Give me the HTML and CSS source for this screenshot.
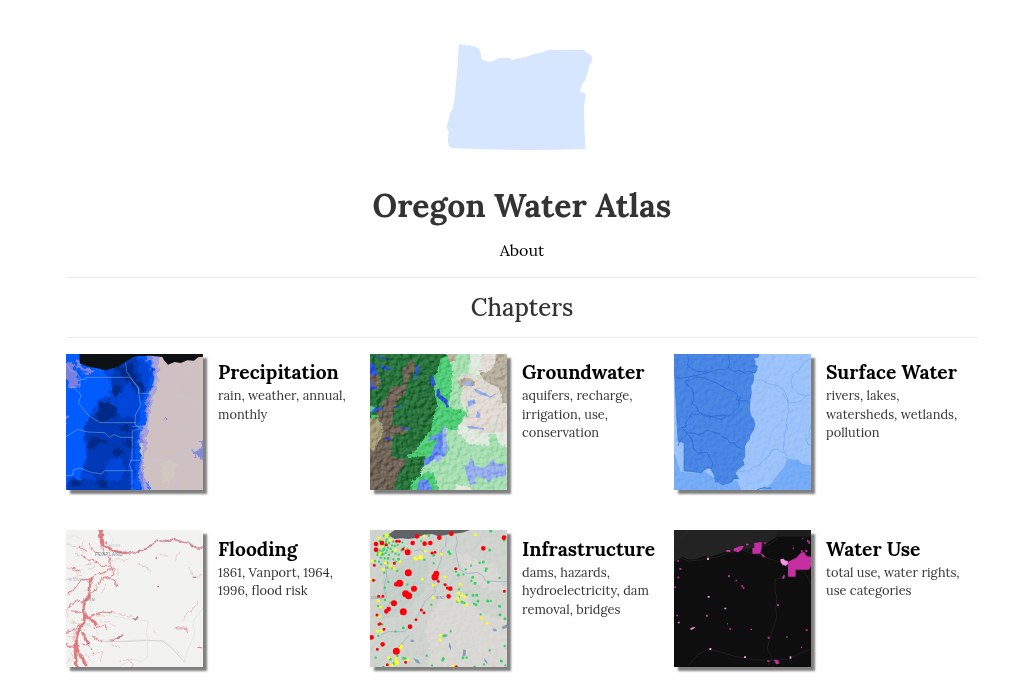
FILE: index.html
```html
<!DOCTYPE html>
<html lang="en">
<head>
<meta charset="utf-8">
<title>Oregon Water Atlas</title>
<link rel="stylesheet" href="styles.css">
</head>
<body>
<svg class="defs" width="0" height="0" aria-hidden="true">
  <defs>
    <filter id="rough" x="-5%" y="-5%" width="110%" height="110%" color-interpolation-filters="sRGB">
      <feTurbulence type="fractalNoise" baseFrequency="0.06" numOctaves="3" seed="4" result="n"/>
      <feDisplacementMap in="SourceGraphic" in2="n" scale="24" xChannelSelector="R" yChannelSelector="G"/>
      <feGaussianBlur stdDeviation="1"/>
    </filter>
    <filter id="ragged" x="-5%" y="-5%" width="110%" height="110%" color-interpolation-filters="sRGB">
      <feTurbulence type="fractalNoise" baseFrequency="0.09" numOctaves="2" seed="9" result="n"/>
      <feDisplacementMap in="SourceGraphic" in2="n" scale="12" xChannelSelector="R" yChannelSelector="G"/>
      <feGaussianBlur stdDeviation="0.8"/>
    </filter>
    <filter id="relief" x="0" y="0" width="100%" height="100%" color-interpolation-filters="sRGB">
      <feTurbulence type="fractalNoise" baseFrequency="0.07" numOctaves="3" seed="12"/>
      <feColorMatrix values="0 0 0 0 0  0 0 0 0 0  0 0 0 0 0  1 0 0 0 0"/>
      <feDiffuseLighting surfaceScale="8" diffuseConstant="0.66" lighting-color="#fff"><feDistantLight azimuth="225" elevation="52"/></feDiffuseLighting>
    </filter>
  </defs>
</svg>
<main class="page">
  <header class="masthead">
    <svg class="logo" viewBox="6 0 540 405" role="img" aria-label="Oregon">
      <path fill="#d6e6fe" d="M92 42l7 4 8-2 5 3 8-2 6 4 9 0 9 6 6 8 3 13 1 12 12 5 14 2 12-2 8-6 12-4 16 0 12 1 5 6 10-2 14-4 16-2 14-5 14-5 16-4 15-3 11-5 107-1 9 9 14 9 2 10-3 9-7 12-4 18-4 13-3 11-7 9-5 12-4 12 2 4 11 0 4 7-1 10-2 12-2 6 1 70 4 65-90 2-100 1-100-2-109-3-9-4-5-13 0-16 2-14-2-9-5-9 3-8 5-17 4-15 8-16 4-20 3-32 4-44 4-42 1-33 3-22z"/>
    </svg>
    <h1 class="title">Oregon Water Atlas</h1>
    <a class="about">About</a>
  </header>
  <h2 class="section-title"><span>Chapters</span></h2>
  <section class="chapters">
    <article class="chapter">
      <svg class="thumb" viewBox="18 27 411 408" preserveAspectRatio="none">
        <path fill="#005cff" d="M18 27h411v408H18z"/>
        <g filter="url(#rough)">
          <path fill="#0047d9" d="M125 70l65-30 60 0 28 35-25 90-5 60-15 70-15 145H70l-10-55 20-50-10-40 5-60 30-45 10-30 35-5 5-45z"/>
          <path fill="#0039b5" d="M75 230l40-30 10-25 35 0 15 35 50 10-5 80-15 50 10 95H120l-20-55-30-12 14-52zM25 400l40 5 40-4 25 44H20zM160 60l70-20 20 80 20 10-35 25-30-40-40 50-15-50z"/>
          <path fill="#0047d9" d="M140 350l40-10 20 30-20 40-40-10zM165 190l40-20 10 30-30 15z"/>
          <path fill="#002a88" d="M170 72l45-20 12 50 30 20-8 22-30-30-25-8-10-20zM120 170l25-5 25 25-5 30-45 10-12-20zM160 125l22 0-5 30-15-6zM80 290l30-18 30 20-30 5-10 18-18-10zM155 315l25-10 10 20-25 8zM110 405l30 3 8 20-30 3zM200 280l18 8-5 22-14-8zM35 410l30-3-8 16-20 0zM175 240l30 0 10 20-30-6z"/>
          <path fill="#7b7fe0" d="M0 48l38 5 5 23 8 5 4 40-28 5-15-45zM10 215l14 5-4 15-10-2zM48 35l20 35 50 5-30 10-20-5-20-15z"/>
          <path fill="#0059f4" d="M275 35l22 0-18 60 5 60-30 55-5 55 0 65-8 50 12 70-18 0-10-70 4-90 8-60 12-70 30-65z"/>
          <path fill="#7a83e4" d="M240 20h70l-3 70-18 40 3 50-30 65-5 30 0 70-15 40 30 70h-20l-18-60 8-60-5-50 18-60 4-60 25-50-10-65z"/>
          <path fill="#a7a2db" d="M273 20h60l-20 60-15 42 2 58-30 65-4 30-2 60-15 40 28 80h-16l-18-70 6-60-2-60 18-70 10-60 10-45z"/>
          <path fill="#cfc1c1" d="M308 20h142v430H278l-28-72 2-50 10-60 5-60 14-45 11-48 4-60z"/>
          <path fill="#808be0" d="M424 290l25-5v62l-32-7-8-12-14 0 5-10 18-2zM314 216h5v5h-5zM395 315h5v5h-5z"/>
          <path fill="#d2c8bd" d="M298 348l48 0-1 40-18 28-18-6z"/>
          <path fill="#cfc1c1" d="M240 300l8-10 1 50-9-6z"/>
        </g>
        <path fill="#0d1114" d="M58 27H429v8l-15 2-12 10-20-1-20 8-18-3-20 8-12-13-5-10-35-4-40 2-15 4-20 12-25 16-35 10-25-6-28-5-24-10z"/>
        <g class="county">
          <path d="M22 60l10 18 14 0 14 20v28l-36 2M60 103l18-1v-5h130l28 30v18h34M197 55l3 25 36 52 0 12 6 38-16 28-1 28 16 12-24 8-1 84-8 18 8 18 0 58M38 125l20 18 5 10-8 20 30 38 35 22h108M18 275l36-22 30 8 50 2 14 14 14-8 20 8h36M218 244h211M210 346h142v-20h24v-17h53M331 346v60h22v30M18 392l20-2 2-15 20-6 30 12 35 6 8-10h86M370 53l6 20-4 30-24 28 0 20 40 12 10 20h31"/>
        </g>
      </svg>
      <div class="text"><h3 class="name">Precipitation</h3><p class="tags">rain, weather, annual,<br>monthly</p></div>
    </article>
    <article class="chapter">
      <svg class="thumb" viewBox="18 27 411 408" preserveAspectRatio="none">
        <path fill="#a8dfb3" d="M18 27h411v408H18z"/>
        <g filter="url(#ragged)">
          <path fill="#28733b" d="M0 10h215l50 30-35 22-8 50 4 18-4 40-16 90-15 80-22 40-5 70H0z"/>
          <path fill="#716457" d="M0 260l50-75 35-60 32-5 0-48 32-32 5 30-22 35-10 45-24 18-10 40-5 30 48 8-5 18-38 8-8 60 50 15-30 45-15 53H0zM18 85l25 5 10 17-8 20-25 10z"/>
          <path fill="#a59e79" d="M0 225l32-8 24 20 0 30-25 50-31-10z"/>
          <path fill="#50cd78" d="M230 40l30-10 4 50-1 60-10 45 40 8 22 14-20 38-22 12-30-6-16 70-20 12-16 20-10-20-50 6-5-8 30-12 15-25 30-40 5-30 14-42-4-30-14-45 16-25zM173 390l30-20 28 30 15 50H140l5-44zM18 180l20 10-20 15zM20 208l26 4-20 12z"/>
          <path fill="#a8dfb3" d="M262 48l60-10v85l-30 10-3 32 14 33-35-5-8-35 5-60zM244 250l40 10 10 44 40 10 110 25v110H228l-20-68-35-4 20-23 60-30z"/>
          <path fill="#50cd78" d="M240 285l18 28-18 20z"/>
          <path fill="#e0eadf" d="M320 10h35v80l-20 0 0 50-30 0 0 80 75 40 65-12v60l-42-12-7-30-20 0v36l-60-5-38-38 28-54-16-40 0-24 22-10z"/>
          <path fill="#dedad2" d="M350 10h100v250l-105 5-48-24 18-45-24-32 6-30-14-40 30-10 30 15 12-20z"/>
          <path fill="#b8b09f" d="M395 10h55v180l-33-20-12-40-42-22-18-32 28-8zM280 110l30-16 22 15 0 14-10 0-2-8-16 0-4 14-12-4zM250 20l30 0-6 28-20 0z"/>
          <path fill="#e2dcd5" d="M318 160l60-10 26 42-8 30-50 22-30-2 18-40zM360 30l40-6-10 40-20 20-20-4z"/>
          <path fill="#e2e7dc" d="M275 420l45 3 8 30h-60z"/>
        </g>
        <g fill="#6389ee">
          <path d="M222 280l20-6 2 60-30 6-20 16-14 8 0-20 20-12 10-26zM192 286l12-12 24-10 14-24 0 30-15 10-30 8zM160 435l5-26 14-8 12 4 6 12 10 18z"/>
          <path fill="#97aeee" d="M236 252l8-10 4 60 6-10-2 26-16 12zM212 335l24-8-4 18-16 8zM318 338l10 8 4 16 26 6 14-5 8-16 8-4 4 12 34 4v35l-38 5-14 14-10-12-24-8-8 12 6 12-20 2-10-30-4-20-10-10 20 4zM303 108l20 4 0 12-18-2zM310 168l22-5 4 12-22 10zM340 200l10 6-2 12-14 0zM310 242l50 8 0 4-48-4zM328 130l40 16 10 8 24-10-24 14-40-14z"/>
          <path fill="#2e55d9" d="M18 50l20 15-3 10 10 12-20 5-7-5zM45 60l45 10-30 5zM28 30l60 14-40-4zM18 105l12 20 18 5-28 5zM150 102l8-40 10-2-4 22-6 8-2 14zM197 97l12-2 6 25-12 6zM218 135l8-5 4 20 22 16-2 8 6 12-8 2-4-12-18-14-8-10zM18 205l16-18 30 2-44 16zM88 188l52-14-44 16zM62 275l20 5-8 8-8-6zM110 248l30 0 2 5-28 0z"/>
        </g>
        <path class="relief strong" d="M18 27h411v408H18z" filter="url(#relief)"/>
      </svg>
      <div class="text"><h3 class="name">Groundwater</h3><p class="tags">aquifers, recharge,<br>irrigation, use,<br>conservation</p></div>
    </article>
    <article class="chapter">
      <svg class="thumb" viewBox="18 27 411 408" preserveAspectRatio="none">
        <path fill="#9dc3fa" d="M18 27h411v408H18z"/>
        <path fill="#76acf6" d="M18 320l20 60 40 4 30-6 30 20 70 10 12 27H18zM429 360l-24-2-14-14-34-3-8 24-22 26-18 26-14 10-5-6-10 14h149z"/>
        <path fill="#4986e4" stroke="#3475dc" stroke-width="2" d="M17 26h255l0 9-16 5 6 12-2 7 8 4-2 12-4 8-8 2 4 10-4 20-6 8 2 20-4 22-2 30 5 18 7 8 4 18-4 16-10 14-2 14-10 12-4 8 0 34-6 8 4 14-22 18-4 8 10 16-14 0-8 10-26 8-14-8-8 0-2-18-12-22-8-2-12 6-8 8-20-2-32-3 0-85-18-4z"/>
        <path fill="#9dc3fa" d="M18 302l14 0 0 24-14 2z"/>
        <g class="watershed">
          <path d="M58 27l4 18-4 16 25 17 36 4 40-10 10 4 12-8 4-16-5-24M18 88l14 12 18-2 50-10 20-6M182 68l16 12 16-4 18 10 8-8 22 6M50 108l22-4 10-8 22 2 42 16 30 18 24 10 10 10-6 10 6 4 30 2M50 108l10 14 12 10 6 20 0 14-6 8 6 6 8 4 6 16 6 8 24 8 10-2 20-2 12-2 16 4 14-8 4-8 12-8 4-12-2-14 6-8M70 205l16 4 12-4 40 12 26 8 8-12M70 205l-6 14-8 8-4 20-12 0 12 12 6 8-24 24-4 12M54 264l20 0 20 5 12-4 8-10 16 4 24 8 12 10 14 6 4 10 14 0 8 12 20 8M58 266l12 16 6 14 0 16 14 12 26-2 12 20 6 14-4 16"/>
        </g>
        <g class="watershed light">
          <path d="M260 108l18-4 22 12 30 6 18 14 10 22 4 42-8 34 4 18-8 14-4 50 10 14 0 12M342 142l20 30 24 0 14-6 16-16 13 0M429 40l-22 12-14 24-16 10-8 20 4 22 20 20 20 4M206 382l16-4 20 0 14-14 16-2 14-16 14-10 10-20 16-4 14 10 10 0M429 240l-6 22 2 16-10 4 4 14 10 6M62 380l4 10-4 20-14 4-8 8H18"/>
        </g>
        <path fill="none" stroke="#3475dc" stroke-width="3" d="M268 434l20-6 8 2 14-1"/>
        <path class="relief" d="M18 27h411v408H18z" filter="url(#relief)"/>
      </svg>
      <div class="text"><h3 class="name">Surface Water</h3><p class="tags">rivers, lakes,<br>watersheds, wetlands,<br>pollution</p></div>
    </article>
    <article class="chapter">
      <svg class="thumb" viewBox="18 27 411 411" preserveAspectRatio="none">
        <path fill="#f2f2f1" d="M18 27h411v411H18z"/>
        <g fill="none" stroke="#dfe0e0" stroke-width="2">
          <path d="M120 27l10 30 15 15 20 15 60 5 60-20M140 27l20 28-10 20M18 55l25-12 20 10M130 160l-20 30-20 70 10 20 60 5 55 10 50 5-6 35 5 23 48 1 40 30 28 33M262 358l0 50-26 20M429 260l-30 40 5 40-20 44-12 40M180 435l40-20 20 5M100 280l15 75 60 5 80-4"/>
          <path stroke="#d6d6d6" stroke-width="3" d="M130 362l60 0 70-4 48 2 30 24 36 40"/>
        </g>
        <g filter="url(#ragged)" fill="none" stroke="#de7b7f" stroke-linecap="round" stroke-linejoin="round">
          <path stroke-width="15" d="M122 20l0 25"/>
          <path stroke-width="9" d="M123 45l2 22 8 6M92 174l-4 24 0 32M70 262l4 22-2 20-16 24"/>
          <path stroke-width="7" d="M130 72l20 12 20 8 28 4M88 225l-14 16-4 22"/>
          <path stroke="#d08b90" stroke-width="4.5" d="M195 96l27 0 30-10 24-14 14-14 20 4 30-7 28 8 20 4 20 14 22 0 28-8"/>
          <path stroke-width="9" d="M56 326l-8 30 4 30 14 24 12 22M78 287l20 12 10 12M68 335l12 24 6 8M46 370l0 30 4 34"/>
          <path stroke-width="3" d="M92 172l20-12 24-6 8-10 20 0M122 75l10 24 18 10-4 14 10 20 6 18-18 10-20 4-10 26-24 18M118 100l-20-12-10-20M80 90l-20-12M66 106l20 10 26 6 12 14 22 0M60 150l-24-10M84 176l-20 0-16 22-24 20M70 245l-20-6-24 20M65 275l-30-6M60 310l-22 20-20 4M42 375l-20 2-4-20M90 290l18-12 20-4 28 0M105 320l30-8 6 12M100 345l12 12 14 4M72 370l20 8 8 20M128 170l16-4 22 14 4 18"/>
          <path stroke-width="2" opacity=".5" d="M18 70l40 10 12 16M18 140l30 8 14 16M18 176l30-6M30 215l24-16M22 260l0 28M30 300l24 10M156 274l28 6 30 6 10 10 10-6M148 360l20-8 22-10M152 124l18-10 22 4 20-4M160 140l14 10 2 14M150 370l30 10M96 400l32-8-6 30M180 420l30-6 8 20M236 130l16 4 20 16M300 100l20 6M360 90l-12 20 0 10M386 140l20 30 20-8M370 300l10-24 16-8 12-18 6-10M414 380l12 0M280 330l12 10M30 390l10 18-6 18M48 320l-10 40M76 400l20 20M108 130l-10 12-12 2M44 96l16 10M70 60l-6 20M110 190l0 20M82 206l-14 8M120 300l26 4 20 12M106 286l12-4 16 4M24 345l20 4M30 410l-8 14M54 160l-14 16M98 130l-24 2M140 190l-14 24"/>
          <path stroke-width="2.5" d="M348 320l32 2 2 12M152 358l20-6 16-8"/>
        </g>
        <g fill="#ae7c84"><path d="M216 291l10 8 10-10-4-4-6 8zM168 352l10-6 12-4-14 12zM136 62h5v6h-5zM292 195h5v4h-5zM286 109h5v4h-5zM398 167h10v3h-10zM412 379h12v2h-12z"/></g>
        <g class="map-label"><text x="104" y="106" font-size="15" textLength="85">PORTLAND</text><text x="127" y="77" font-size="9" textLength="54" opacity=".5">ANCOUVER</text><text x="68" y="241" font-size="10" textLength="37">SALEM</text><text x="26" y="179" font-size="8" textLength="62" opacity=".6">MCMINNVILLE</text><text x="54" y="314" font-size="8" textLength="38" opacity=".5">ALBANY</text><text x="24" y="329" font-size="8" textLength="53" opacity=".5">CORVALLIS</text></g>
      </svg>
      <div class="text"><h3 class="name">Flooding</h3><p class="tags">1861, Vanport, 1964,<br>1996, flood risk</p></div>
    </article>
    <article class="chapter">
      <svg class="thumb" viewBox="18 27 411 411" preserveAspectRatio="none">
        <path fill="#d0d4cf" d="M18 27h411v411H18z"/>
        <g filter="url(#rough)"><path fill="#d9d8d4" d="M230 230l70-10 60 60 70 20v140H190l10-70-20-40zM270 90l120 40 40 90-80-20-60-60z"/><path fill="#c6d0ca" d="M60 160l80-60 60 20-20 100-80 60-60 20z"/></g>
        <path class="relief" d="M18 27h411v411H18z" filter="url(#relief)"/>
        <path fill="#606365" d="M92 27H318l-24 8-32 4-38 7-20-7-26 3-20 8-24 4-22-2-20 2-20-12z"/>
        <g fill="none" stroke="#a6bac9" stroke-width="3"><path d="M248 44l-4 32-12 10 0 30-14 34-8 34 4 30-30 26-24 46M276 44l4 20-6 20 4 20 8 40 24 14 30-4 16 10 10 16 34 2 36 0M62 120l6 40-8 40 8 30M150 90l20-4 12 10M50 342l22-10 50 0 20-20M92 392l26-30 18-20"/></g>
        <g fill="none" stroke="#bec8ca" opacity=".6"><path d="M60 140h50v65H60zM150 130v70h60M150 340v50h60M210 280h45M210 337h40M70 205l50 1M180 365h20"/></g>
        <g fill="#7f9dc0"><path d="M256 364l6 14-2 10-6-12zM298 384l8 4-2 18-8-2zM148 412l14 4 8 14-14-6zM386 323l10 0 3 8-10 0zM413 318l16-8v10l-12 5zM140 356h9v7h-9zM360 412l8 8 4 10-10-8zM242 340h8v7h-8z"/></g>
        <text class="city" x="217" y="235" font-size="9">BEND</text><text class="city" x="21" y="235" font-size="9">EUGENE</text>
        <g class="dots green">
          <path stroke-width="7" d="M60 45h0M68 55h0M55 62h0M65 70h0M75 66h0M84 73h0M58 80h0M72 80h0M92 75h0M47 88h0M55 91h0M65 96h0M40 102h0M75 101h0M85 92h0M95 98h0M50 110h0M62 112h0M45 122h0M52 130h0M70 125h0M88 115h0M95 122h0M104 101h0M112 88h0M120 80h0M115 64h0M58 100h0M69 88h0M80 84h0M42 95h0M33 120h0M66 62h0M76 45h0M88 62h0M101 72h0M130 84h0M61 155h0M70 140h0M85 142h0M100 150h0M32 178h0M73 183h0M63 200h0M80 245h0M63 237h0M195 45h0M171 60h0M181 116h0M209 127h0M321 134h0M347 125h0M276 152h0M305 145h0M298 160h0M322 180h0M308 221h0M285 205h0M365 150h0M407 171h0M380 240h0M330 248h0M350 280h0M301 246h0M202 251h0M240 190h0M95 332h0M55 310h0M260 331h0M35 410h0M58 438h0M188 404h0M125 412h0M100 405h0M204 433h0M308 410h0M377 388h0M424 433h0M360 430h0M332 437h0M42 255h0M43 345h0M130 190h0M422 375h0"/>
          <path stroke-width="9" d="M254 92h0M258 98h0M377 87h0M367 143h0M283 162h0M326 169h0M333 187h0M358 123h0M373 184h0M420 57h0M209 103h0M118 320h0M119 412h0M140 316h0M342 240h0M284 229h0M407 256h0M238 413h0M281 242h0M338 223h0M239 345h0M79 415h0M90 427h0M327 223h0M371 240h0M380 30h0M48 60h0M63 72h0M53 100h0M72 112h0M60 85h0M104 115h0M408 281h0M423 293h0M294 243h0M336 251h0M236 417h0M297 410h0M412 420h0"/>
        </g>
        <g class="dots yellow">
          <path stroke-width="9" d="M45 52h0M70 42h0M78 57h0M55 77h0M94 87h0M108 122h0M79 135h0M48 97h0M25 120h0M64 125h0M66 45h0M90 142h0M152 111h0M128 87h0M184 90h0M232 100h0M181 45h0M335 41h0M243 168h0M208 192h0M207 230h0M283 216h0M352 292h0M369 307h0M230 343h0M229 357h0M268 436h0M46 286h0M40 330h0M132 416h0M52 330h0M43 240h0M50 258h0M96 412h0M84 432h0M112 375h0M110 381h0M289 190h0M282 230h0M308 251h0M175 175h0M18 175h0M58 145h0M74 410h0M302 228h0M157 114h0M284 240h0M294 222h0"/>
          <path stroke-width="14" d="M170 109h0M98 425h0"/>
        </g>
        <g class="dots red">
          <path stroke-width="9" d="M98 61h0M106 61h0M67 71h0M31 133h0M28 178h0M91 127h0M204 96h0M213 94h0M223 181h0M244 191h0M275 143h0M421 211h0M172 267h0M180 275h0M156 296h0M49 308h0M60 325h0M125 424h0M40 385h0M70 431h0M44 226h0M39 282h0M250 201h0M45 310h0M57 226h0M117 85h0M277 437h0"/>
          <path stroke-width="14" d="M36 69h0M54 66h0M36 86h0M159 46h0M182 68h0M199 66h0M146 66h0M226 50h0M262 38h0M358 82h0M420 50h0M254 226h0M259 203h0M138 317h0M56 370h0M23 349h0M67 271h0M74 264h0M97 190h0"/>
          <path stroke-width="18" d="M131 94h0M217 158h0M150 203h0M90 247h0"/>
          <path stroke-width="21" d="M133 155h0M107 187h0M213 168h0M125 218h0M134 224h0M118 272h0M97 391h0"/>
        </g>
      </svg>
      <div class="text"><h3 class="name">Infrastructure</h3><p class="tags">dams, hazards,<br>hydroelectricity, dam<br>removal, bridges</p></div>
    </article>
    <article class="chapter">
      <svg class="thumb" viewBox="18 27 411 411" preserveAspectRatio="none">
        <path fill="#0e0e0e" d="M18 27h411v411H18z"/>
        <path fill="#232323" d="M18 27h314l-6 20-20 14-20 14-40 8-40 5-36 6-44 14-20-2-22 9-20 1-22-8-16 10-8 3z"/>
        <path fill="#1d1d1d" d="M332 27h97v20H326z"/>
        <g fill="none" stroke="#2f2f2f" stroke-width="2"><path d="M18 75l20-20 22-28M18 121l20-10 24 9 40-3 22-8 18 1 36-14 34-6 50-5 40-14 28-19M230 90l50 16 50 16M290 40l-14 26M345 170l-24 6 0 30 6 30-4 30 4 20-10 30-12 40-8 30 16 22-12 24M62 434l30-36 30-14 40 10 30 10 60 12 50 2 60-4 36-18 31-11M352 130l60 25 17 34" opacity=".75"/></g>
        <g fill="#c52fa2"><path d="M259 66l22-3 0 20-4 12 10 6 4 8-6 0-6-11-26 0 0-16 6-2zM197 83l10-4 12-4 8 0-4 10-8 6-4 3-14-4zM175 87h12v6h-12zM234 68h8v5h-8zM360 122l25-12 14-15 10-2 6 12 14 2v28l-6 11-40 0 0 21-23 0zM343 168l3-5h5l-2 10h-6zM316 417l8-1 8 3 1 9-8 2-4-8zM298 418h6v5h-6zM417 57h5v4h4v7h-5v-5h-4zM399 88h5v6h-5zM412 87h6v6h-6zM402 51h4v3h-4zM289 64h4v5h-4zM374 80h4v4h-4zM34 141h6v5h-6zM28 167h6v5h-6zM28 118h5v4h-5zM19 196h5v5h-5zM180 163h6v5h-6zM202 176h5v5h-5zM220 193h5v4h4v6h-5v-5h-4zM327 249h6v6h-6zM114 281h6v6h-6zM25 281h5v5h-5zM299 347h6v6h-6zM184 321h5v5h-5zM247 323h5v4h-5zM414 325h5v5h-5zM399 377h4v4h-4z"/></g>
        <g fill="#f692e0"><path d="M337 115l10-2 3 5 9 2 1 8-6 6-10-2-6-8zM117 110h6v7h-6zM119 225h6v5h-6zM169 260h6v5h-6zM67 322l12-5 2 3-11 7-3-2zM124 381h6v6h-6zM228 406h6v5h-6zM365 406h5v7h-5zM30 302h5v5h-5z"/><path fill="#777" d="M355 346h4v4h-4zM177 307h3v3h-3z"/></g>
      </svg>
      <div class="text"><h3 class="name">Water Use</h3><p class="tags">total use, water rights,<br>use categories</p></div>
    </article>
  </section>
</main>
</body>
</html>
```
FILE: styles.css
```css
* { box-sizing: border-box; }
body { margin: 0; background: #fff; color: #333; font-family: Lora, "Liberation Serif", serif; overflow: hidden; }
.defs { display: block; height: 0; }
.page { width: 912px; margin-left: 66px; padding-top: 30px; }
.masthead { display: flex; flex-direction: column; align-items: center; height: 248px; border-bottom: 1px solid #eaeaea; }
.logo { width: 180px; height: 135px; flex: none; }
.title { margin: 17px 0 0; font-size: 32px; line-height: 48px; font-weight: 700; white-space: nowrap; }
.about { margin-top: 8px; font-size: 16px; line-height: 24px; color: #000; }
.section-title { margin: 0; height: 60px; border-bottom: 1px solid #eaeaea; text-align: center; font-weight: 500; font-size: 24px; line-height: 59px; }
.chapters { display: grid; grid-template-columns: repeat(3, 304px); grid-template-rows: 176px 176px; padding-top: 16px; }
.chapter { display: grid; grid-template-columns: 137px 1fr; column-gap: 15px; align-items: start; }
.thumb { display: block; width: 137px; height: 136px; box-shadow: 3.5px 3.5px 2px #808080; }
.chapter:nth-child(n+4) .thumb { height: 137px; }
.text { padding-top: 5px; }
.chapter:nth-child(n+4) .text { padding-top: 6px; }
.name { margin: 0; font-size: 19.2px; line-height: 27px; font-weight: 700; color: #000; white-space: nowrap; }
.tags { margin: 1px 0 0; font-size: 12.8px; line-height: 18.5px; white-space: nowrap; }
.chapter:nth-child(n+4) .tags { line-height: 18.4px; }
.county path { fill: none; stroke: #bdcbed; stroke-width: 2; opacity: .6; }
.watershed path { fill: none; stroke: #2d6bd8; stroke-width: 2.5; stroke-linejoin: round; }
.watershed.light path { stroke: #7cacf2; }
.relief { mix-blend-mode: soft-light; opacity: .22; }
.relief.strong { opacity: .8; }
.dots path { fill: none; stroke-linecap: round; }
.green path { stroke: #36d45f; }
.yellow path { stroke: #ffff18; }
.red path { stroke: #ff0008; }
.map-label, .city { font-family: "Open Sans", sans-serif; fill: #77858f; }
```
